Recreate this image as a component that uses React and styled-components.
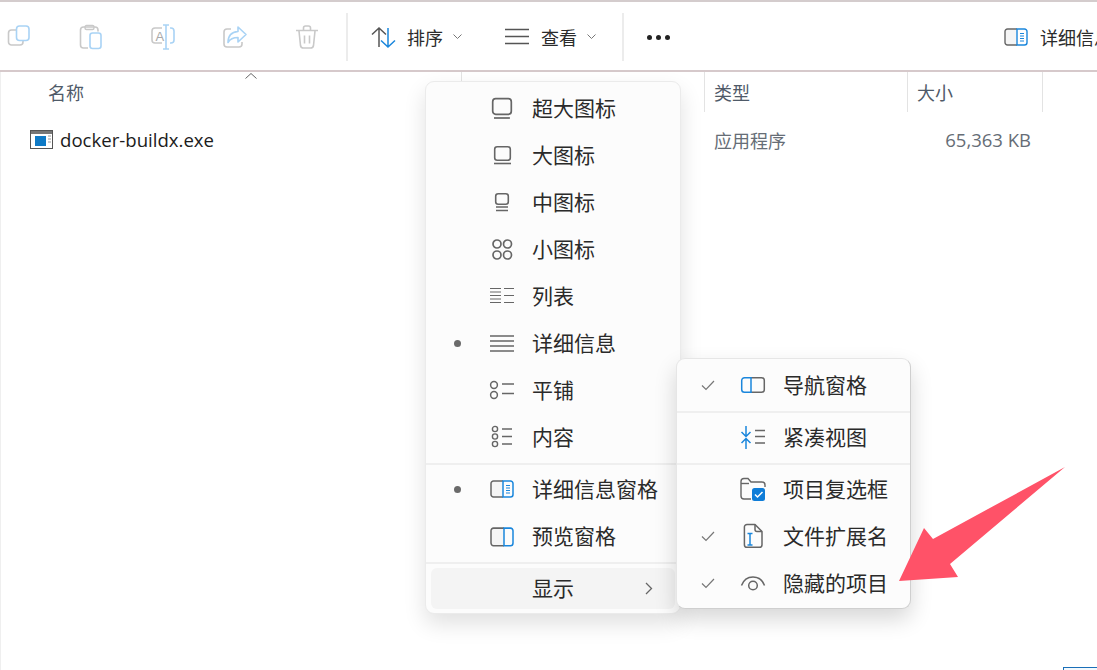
import React from 'react';
import styled, { createGlobalStyle } from 'styled-components';

const GlobalStyle = createGlobalStyle`
  html, body {
    margin: 0;
    padding: 0;
    background: #fff;
  }
  body {
    font-family: "Noto Sans CJK SC", "Noto Sans", sans-serif;
  }
`;

const GREY = '#666';
const BLUE = '#1a86dc';

// 工具栏图标
const Icon = ({ w = 24, h = 24, children }) => (
  <svg width={w} height={h} viewBox={`0 0 ${w} ${h}`} fill="none" strokeWidth="1.4" style={{ overflow: 'visible', flex: 'none' }}>
    {children}
  </svg>
);

const CopyIcon = () => (
  <Icon w={22} h={24}>
    <path d="M8 5H3.5A3 3 0 0 0 .5 8v9a3 3 0 0 0 3 3H12a3 3 0 0 0 3-3v-2" stroke="#c9c9c9" strokeWidth="1.6" />
    <rect x="8.5" y="1" width="12.5" height="14.5" rx="3" stroke="#a9d3f5" strokeWidth="1.6" />
  </Icon>
);

const PasteIcon = () => (
  <Icon w={22} h={24}>
    <path d="M8 23H3.5a3 3 0 0 1-3-3V5a3 3 0 0 1 3-3H15a3 3 0 0 1 3 3v1.5" stroke="#c9c9c9" strokeWidth="1.6" />
    <rect x="5" y="0.5" width="9" height="4" rx="1.5" stroke="#c9c9c9" strokeWidth="1.4" />
    <rect x="10" y="8" width="11" height="15.5" rx="2.5" stroke="#a9d3f5" strokeWidth="1.6" />
  </Icon>
);

const RenameIcon = () => (
  <Icon w={24} h={24}>
    <path d="M11 3H4a3 3 0 0 0-3 3v9a3 3 0 0 0 3 3h7" stroke="#c9c9c9" strokeWidth="1.6" />
    <path d="M19 3h1a3 3 0 0 1 3 3v9a3 3 0 0 1-3 3h-1" stroke="#a9d3f5" strokeWidth="1.6" />
    <path d="M15 0v24M12 0h6M12 24h6" stroke="#a9d3f5" strokeWidth="1.6" />
    <text x="4.5" y="15.5" fontSize="13" fill="#a9a9a9" fontFamily="Liberation Sans, sans-serif">A</text>
  </Icon>
);

const ShareIcon = () => (
  <Icon w={24} h={24}>
    <path d="M8 4H4a3 3 0 0 0-3 3v12a3 3 0 0 0 3 3h12a3 3 0 0 0 3-3v-2" stroke="#c9c9c9" strokeWidth="1.6" />
    <path d="M15 2l8 7.5-8 7.5v-4.5c-5 0-8 1.5-10 5 0-6 3-10.5 10-11z" stroke="#a9d3f5" strokeWidth="1.6" strokeLinejoin="round" />
  </Icon>
);

const DeleteIcon = () => (
  <Icon w={22} h={24}>
    <path d="M0 5.5h22M7.5 5V3a2 2 0 0 1 2-2h3a2 2 0 0 1 2 2v2M3 6l1.5 14.5a3 3 0 0 0 3 2.5h7a3 3 0 0 0 3-2.5L19 6M8.5 10.5v8M13.5 10.5v8" stroke="#c9c9c9" strokeWidth="1.6" />
  </Icon>
);

const SortIcon = () => (
  <Icon w={24} h={24}>
    <path d="M8 22V3M1 9.5L8 3l7 6.5" stroke="#555" strokeWidth="1.5" />
    <path d="M17 3v19M10 15.5l7 6.5 7-6.5" stroke={BLUE} strokeWidth="1.5" />
  </Icon>
);

const LinesIcon = () => (
  <Icon w={24} h={18}>
    <path d="M0 1.5h24M0 8.5h24M0 15.5h24" stroke="#555" strokeWidth="1.5" />
  </Icon>
);

const Chevron = () => (
  <Icon w={9} h={6}>
    <path d="M.5 .5l4 4 4-4" stroke="#777" strokeWidth="1" />
  </Icon>
);

const DetailsPaneIcon = () => (
  <Icon w={24} h={18}>
    <path d="M12 1H3.5A2.5 2.5 0 0 0 1 3.5v11A2.5 2.5 0 0 0 3.5 17H12z" fill="#f5f5f5" />
    <path d="M13 1H3.5A2.5 2.5 0 0 0 1 3.5v11A2.5 2.5 0 0 0 3.5 17H13" stroke="#666" />
    <path d="M13 1v16h7.5a2.5 2.5 0 0 0 2.5-2.5v-11A2.5 2.5 0 0 0 20.5 1z" stroke={BLUE} />
    <path d="M16 5.5h4M16 8h4M16 10.5h4M16 13h4" stroke={BLUE} strokeWidth="1.2" />
  </Icon>
);

const MENU_ICONS = {
  xl: (
    <>
      <rect x="6.7" y="1.7" width="18.6" height="15.6" rx="3" stroke={GREY} strokeWidth="1.7" />
      <path d="M8 21h16" stroke={GREY} strokeWidth="1.7" />
    </>
  ),
  lg: (
    <>
      <rect x="8.7" y="2.7" width="15.6" height="13.6" rx="2.5" stroke={GREY} strokeWidth="1.6" />
      <path d="M8 19.5h17" stroke={GREY} strokeWidth="1.6" />
    </>
  ),
  md: (
    <>
      <rect x="9.7" y="2.7" width="12.6" height="10.6" rx="2.5" stroke={GREY} strokeWidth="1.6" />
      <path d="M10 16h12M10 19.5h12" stroke={GREY} strokeWidth="1.6" />
    </>
  ),
  sm: (
    <g stroke={GREY} strokeWidth="1.7">
      <circle cx="11" cy="6" r="4" />
      <circle cx="21.5" cy="6" r="4" />
      <circle cx="11" cy="17" r="4" />
      <circle cx="21.5" cy="17" r="4" />
    </g>
  ),
  list: <path d="M4 3.5h11M4 7h11M4 10.5h11M4 14h11M4 17.5h11M18 3.5h10M18 10.5h10M18 17.5h10" stroke={GREY} strokeWidth="1.2" />,
  details: <path d="M4 4h24M4 9h24M4 14h24M4 19h24" stroke={GREY} strokeWidth="1.5" />,
  tile: (
    <>
      <circle cx="8" cy="6" r="3.4" stroke={GREY} strokeWidth="1.5" />
      <circle cx="8" cy="16" r="3.4" stroke={GREY} strokeWidth="1.5" />
      <path d="M16 5h12M16 14.5h12" stroke={GREY} strokeWidth="1.5" />
    </>
  ),
  content: (
    <>
      <circle cx="9" cy="3" r="2.6" stroke={GREY} strokeWidth="1.4" />
      <circle cx="9" cy="10.5" r="2.6" stroke={GREY} strokeWidth="1.4" />
      <circle cx="9" cy="18" r="2.6" stroke={GREY} strokeWidth="1.4" />
      <path d="M16 3h10M16 10.5h10M16 18h10" stroke={GREY} strokeWidth="1.5" />
    </>
  ),
  detailsPane: (
    <g transform="translate(4 2)">
      <path d="M12 1H3.5A2.5 2.5 0 0 0 1 3.5v11A2.5 2.5 0 0 0 3.5 17H12z" fill="#f5f5f5" />
      <path d="M13 1H3.5A2.5 2.5 0 0 0 1 3.5v11A2.5 2.5 0 0 0 3.5 17H13" stroke="#666" strokeWidth="1.5" />
      <path d="M13 1v16h7.5a2.5 2.5 0 0 0 2.5-2.5v-11A2.5 2.5 0 0 0 20.5 1z" stroke={BLUE} strokeWidth="1.5" />
      <path d="M16 5.5h4M16 8h4M16 10.5h4M16 13h4" stroke={BLUE} strokeWidth="1.2" />
    </g>
  ),
  previewPane: (
    <g transform="translate(4 2) scale(1 1.1)">
      <path d="M14 1H3.5A2.5 2.5 0 0 0 1 3.5v11A2.5 2.5 0 0 0 3.5 17H14" fill="#f5f5f5" stroke="#666" strokeWidth="1.5" />
      <path d="M14 1v16h6.5a2.5 2.5 0 0 0 2.5-2.5v-11A2.5 2.5 0 0 0 20.5 1z" stroke={BLUE} strokeWidth="1.5" />
    </g>
  ),
  navPane: (
    <g transform="translate(4 3)">
      <path d="M10 .7h10.5A2.8 2.8 0 0 1 23.3 3.5v9a2.8 2.8 0 0 1-2.8 2.8H10" stroke="#666" strokeWidth="1.5" />
      <path d="M10 .7H3.5A2.8 2.8 0 0 0 .7 3.5v9a2.8 2.8 0 0 0 2.8 2.8H10z" stroke={BLUE} strokeWidth="1.5" />
    </g>
  ),
  compact: (
    <>
      <path d="M9 0v10M4.5 6l4.5 4.5L13.5 6M9 12.5V23M4.5 17L9 12.5l4.5 4.5" stroke={BLUE} strokeWidth="1.5" />
      <path d="M18 4.5h10M18 10.5h10M18 17h10" stroke={GREY} strokeWidth="1.5" />
    </>
  ),
  checkbox: (
    <>
      <path d="M14 21H7a3 3 0 0 1-3-3V3.5A3 3 0 0 1 7 .5h4l3 3.5h11a3 3 0 0 1 3 3v2" stroke={GREY} strokeWidth="1.4" />
      <path d="M4 5.5h8" stroke={GREY} strokeWidth="1.4" />
      <rect x="15" y="10" width="13" height="13" rx="2.5" fill="#0f7dd8" />
      <path d="M18 16.5l2.5 2.5 5-5" stroke="#fff" strokeWidth="1.5" />
    </>
  ),
  extension: (
    <>
      <path d="M18 -.5H10a2.6 2.6 0 0 0-2.6 2.6v17.6A2.6 2.6 0 0 0 10 22.3h12.4a2.6 2.6 0 0 0 2.6-2.6V6.5z" stroke={GREY} strokeWidth="1.5" strokeLinejoin="round" />
      <path d="M18 -.5v5a2 2 0 0 0 2 2h5" stroke={GREY} strokeWidth="1.5" />
      <path d="M13 8.5v11.5M10.5 8.5h5M10.5 20h5" stroke={BLUE} strokeWidth="1.5" />
    </>
  ),
  eye: (
    <>
      <path d="M4.5 13.5C6.5 8 11 5 16 5s9.5 3 11.5 8.5" stroke={GREY} strokeWidth="1.5" />
      <circle cx="16" cy="13.5" r="4.3" stroke={GREY} strokeWidth="1.5" />
    </>
  ),
};

const VIEW_ITEMS = [
  { icon: 'xl', label: '超大图标' },
  { icon: 'lg', label: '大图标' },
  { icon: 'md', label: '中图标' },
  { icon: 'sm', label: '小图标' },
  { icon: 'list', label: '列表' },
  { icon: 'details', label: '详细信息', mark: 'dot' },
  { icon: 'tile', label: '平铺' },
  { icon: 'content', label: '内容' },
];

const PANE_ITEMS = [
  { icon: 'detailsPane', label: '详细信息窗格', mark: 'dot' },
  { icon: 'previewPane', label: '预览窗格' },
];

const SHOW_ITEMS = [
  { icon: 'checkbox', label: '项目复选框' },
  { icon: 'extension', label: '文件扩展名', mark: 'check' },
  { icon: 'eye', label: '隐藏的项目', mark: 'check' },
];

const MenuItem = ({ icon, label, mark }) => (
  <Row>
    <Mark>
      {mark === 'dot' && <Dot />}
      {mark === 'check' && (
        <svg width="14" height="11" viewBox="0 0 14 11" fill="none">
          <path d="M1 5.5l4 4 8-8.5" stroke="#777" strokeWidth="1.2" />
        </svg>
      )}
    </Mark>
    <RowIcon width="32" height="24" viewBox="0 0 32 24" fill="none">
      {MENU_ICONS[icon]}
    </RowIcon>
    <RowLabel>{label}</RowLabel>
  </Row>
);

const App = () => {
  return (
    <Page>
      <GlobalStyle />
      <Toolbar>
        <IconGroup>
          <IconSlot><CopyIcon /></IconSlot>
          <IconSlot><PasteIcon /></IconSlot>
          <IconSlot><RenameIcon /></IconSlot>
          <IconSlot><ShareIcon /></IconSlot>
          <IconSlot><DeleteIcon /></IconSlot>
        </IconGroup>
        <Separator />
        <DropButton>
          <SortIcon />
          <ToolText>排序</ToolText>
          <ChevronSlot>
            <Chevron />
          </ChevronSlot>
        </DropButton>
        <DropButton $second>
          <LinesIcon />
          <ToolText>查看</ToolText>
          <ChevronSlot>
            <Chevron />
          </ChevronSlot>
        </DropButton>
        <Separator $right />
        <Dots>
          <span />
          <span />
          <span />
        </Dots>
        <DetailsButton>
          <DetailsPaneIcon />
          <ToolText>详细信息</ToolText>
        </DetailsButton>
      </Toolbar>

      <Listing>
        <HeaderRow>
          <HeaderCell $pad={47}>
            名称
            <SortCaret width="12" height="6" viewBox="0 0 12 6" fill="none">
              <path d="M.5 5.5L6 .5l5.5 5" stroke="#666" />
            </SortCaret>
          </HeaderCell>
          <HeaderCell />
          <HeaderCell>类型</HeaderCell>
          <HeaderCell>大小</HeaderCell>
        </HeaderRow>
        <FileRow>
          <FileName>
            <svg width="23" height="19" viewBox="0 0 23 19">
              <rect x="0.5" y="0.5" width="22" height="18" fill="#fff" stroke="#555" />
              <rect x="1" y="1" width="21" height="3" fill="#777" />
              <rect x="5" y="6" width="11" height="10" fill="#0f7ac6" />
              <path d="M18 6h3M18 9h3M18 12h3" stroke="#999" />
            </svg>
            docker-buildx.exe
          </FileName>
          <FileCell />
          <FileCell>应用程序</FileCell>
          <FileSize>65,363 KB</FileSize>
        </FileRow>
      </Listing>

      <ViewMenu>
        {VIEW_ITEMS.map((item) => (
          <MenuItem key={item.label} {...item} />
        ))}
        <Divider />
        {PANE_ITEMS.map((item) => (
          <MenuItem key={item.label} {...item} />
        ))}
        <Divider />
        <ShowRow>
          <RowLabel>显示</RowLabel>
          <svg width="8" height="13" viewBox="0 0 8 13" fill="none">
            <path d="M1 1l5.5 5.5L1 12" stroke="#666" strokeWidth="1.3" />
          </svg>
        </ShowRow>
      </ViewMenu>

      <ShowMenu>
        <MenuItem icon="navPane" label="导航窗格" mark="check" />
        <Divider />
        <MenuItem icon="compact" label="紧凑视图" />
        <Divider />
        {SHOW_ITEMS.map((item) => (
          <MenuItem key={item.label} {...item} />
        ))}
      </ShowMenu>

      <Arrow width="1097" height="670" viewBox="0 0 1097 670">
        <polygon points="1065,467 933,539 924,528 899,581 958,577 950,564" fill="#ff5268" />
      </Arrow>
      <CornerBox />
    </Page>
  );
};

const Page = styled.div`
  position: relative;
  width: 1097px;
  height: 670px;
  overflow: hidden;
  background: #fff;
`;

const Toolbar = styled.div`
  display: flex;
  align-items: center;
  box-sizing: border-box;
  height: 72px;
  padding: 2px 0 0 8px;
  border-top: 2px solid #d4cccd;
  border-bottom: 2px solid #d6c9cb;
`;

const IconGroup = styled.div`
  display: flex;
  flex: none;
  align-items: center;
  gap: 50px;
`;

const IconSlot = styled.span`
  display: flex;
  justify-content: center;
  width: 22px;
`;

const Separator = styled.div`
  flex: none;
  width: 2px;
  height: 48px;
  margin-left: ${(p) => (p.$right ? '26px' : '28px')};
  background: #ececec;
`;

const DropButton = styled.div`
  display: flex;
  flex: none;
  align-items: center;
  margin-left: ${(p) => (p.$second ? '43px' : '23px')};
  color: #2b2b2b;
`;

const ToolText = styled.span`
  margin-left: 12px;
  font-size: 18px;
  line-height: 24px;
  color: #2b2b2b;
  white-space: nowrap;
`;

const ChevronSlot = styled.span`
  display: flex;
  margin-left: 10px;
`;

const Dots = styled.div`
  display: flex;
  flex: none;
  gap: 4px;
  margin-left: 23px;

  span {
    width: 5px;
    height: 5px;
    border-radius: 50%;
    background: #222;
  }
`;

const DetailsButton = styled.div`
  display: flex;
  flex: none;
  align-items: center;
  margin-left: 334px;
`;

const Listing = styled.div`
  border-left: 1px solid #efefef;
  height: 598px;
  box-sizing: border-box;
`;

const HeaderRow = styled.div`
  display: grid;
  grid-template-columns: 461px 243px 203px 135px;
  height: 40px;
`;

const HeaderCell = styled.div`
  position: relative;
  box-sizing: border-box;
  padding-left: ${(p) => p.$pad ?? 9}px;
  border-right: 1px solid #e3e3e3;
  font-size: 18px;
  line-height: 40px;
  color: #4f5a68;
`;

const SortCaret = styled.svg`
  position: absolute;
  left: 244px;
  top: 1px;
`;

const FileRow = styled.div`
  display: grid;
  grid-template-columns: 461px 243px 203px 123px;
  align-items: center;
  height: 55px;
`;

const FileName = styled.div`
  display: flex;
  align-items: center;
  gap: 7px;
  padding-left: 29px;
  font-family: "Open Sans", "Noto Sans", sans-serif;
  font-size: 18.6px;
  color: #1c1c1c;
`;

const FileCell = styled.div`
  padding-left: 9px;
  font-size: 18px;
  color: #666d76;
`;

const FileSize = styled.div`
  text-align: right;
  font-family: "Open Sans", "Noto Sans", sans-serif;
  font-size: 18.5px;
  color: #666d76;
`;

const MenuBox = styled.div`
  position: absolute;
  box-sizing: border-box;
  display: flex;
  flex-direction: column;
  padding-top: 3px;
  background: #fcfcfc;
  border-radius: 9px;
`;

const ViewMenu = styled(MenuBox)`
  left: 425px;
  top: 81px;
  width: 256px;
  height: 533px;
  border: 1px solid #ebebeb;
  box-shadow: 0 10px 22px rgba(0, 0, 0, 0.12);
`;

const ShowMenu = styled(MenuBox)`
  left: 676px;
  top: 358px;
  width: 235px;
  height: 251px;
  border: 1px solid #e6e6e6;
  border-right-color: #cfcfcf;
  border-bottom-color: #cfcfcf;
  box-shadow: 0 10px 22px rgba(0, 0, 0, 0.16);
`;

const Row = styled.div`
  display: flex;
  align-items: center;
  flex: none;
  height: 47px;
  padding-left: 18px;
`;

const Mark = styled.span`
  display: flex;
  align-items: center;
  justify-content: center;
  flex: none;
  width: 26px;
`;

const Dot = styled.span`
  width: 7px;
  height: 7px;
  border-radius: 50%;
  background: #6a6a6a;
`;

const RowIcon = styled.svg`
  flex: none;
  margin-left: 16px;
  overflow: visible;
`;

const RowLabel = styled.span`
  margin-left: 14px;
  padding-bottom: 3px;
  font-size: 21px;
  line-height: 28px;
  color: #2a2a2a;
  white-space: nowrap;
`;

const Divider = styled.div`
  flex: none;
  height: 2px;
  margin: 2px 0 1px;
  background: #efefef;
`;

const ShowRow = styled.div`
  display: flex;
  align-items: center;
  justify-content: space-between;
  flex: none;
  height: 41px;
  margin: 3px 5px 0;
  padding-right: 22px;
  border-radius: 6px;
  background: #f4f4f4;

  ${RowLabel} {
    margin-left: 101px;
  }
`;

const Arrow = styled.svg`
  position: absolute;
  left: 0;
  top: 0;
  pointer-events: none;
`;

const CornerBox = styled.div`
  position: absolute;
  left: 1063px;
  top: 667px;
  width: 60px;
  height: 20px;
  border: 1px solid #1a6fb8;
  background: #f4f9fd;
`;

export default App;
